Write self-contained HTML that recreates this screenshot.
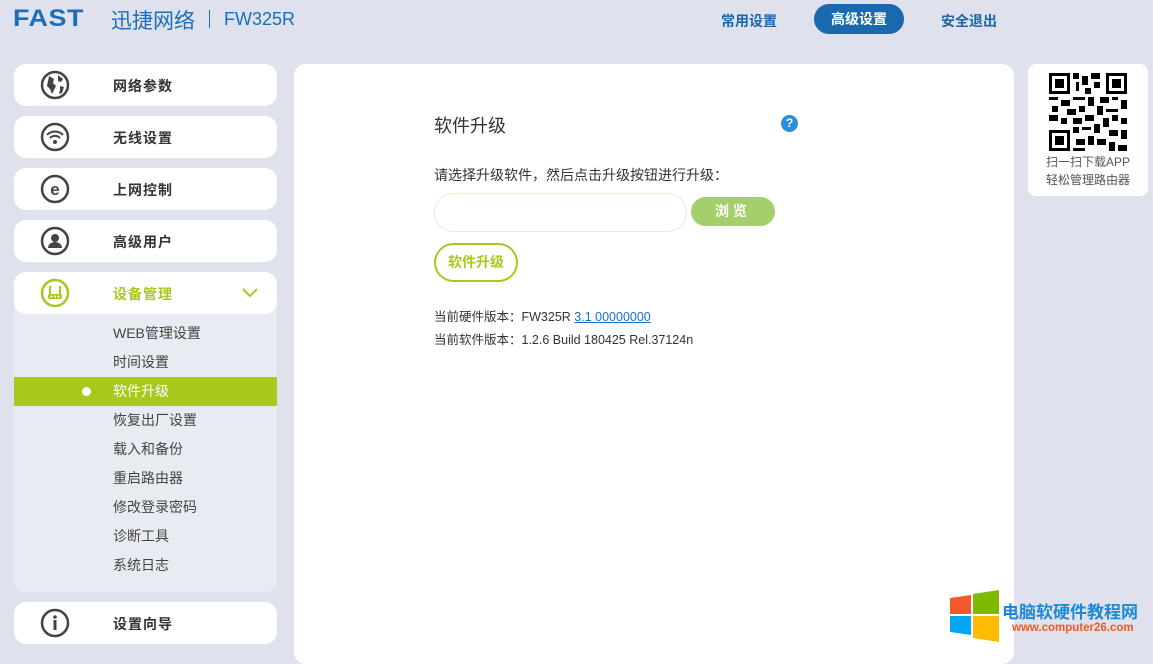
<!DOCTYPE html><html><head><meta charset="utf-8"><style>
*{margin:0;padding:0;box-sizing:border-box}
body{width:1153px;height:648px;overflow:hidden;background:#dfe1ec;font-family:"Liberation Sans","Noto Sans CJK SC",sans-serif;position:relative}
.a{position:absolute}
.item{position:absolute;left:14px;width:263px;height:42px;background:#fff;border-radius:12px}
.item .t{position:absolute;left:99px;top:12px;font-size:14px;font-weight:bold;color:#333;letter-spacing:1px}
.item svg{position:absolute;left:26px;top:6px}
.sub{position:absolute;left:113px;font-size:14px;color:#444}
</style></head><body>
<div class="a" style="left:13px;top:5px;font:900 24px 'Liberation Sans',sans-serif;color:#1a6fb8;letter-spacing:0.5px;transform:scaleX(1.12);transform-origin:left">FAST</div>
<div class="a" style="left:111px;top:5px;font-size:21px;color:#1a6fb8">迅捷网络</div>
<div class="a" style="left:209px;top:10px;width:1px;height:18px;background:#1a6fb8"></div>
<div class="a" style="left:224px;top:9px;font-size:18px;color:#1a6fb8">FW325R</div>
<div class="a" style="left:721px;top:11px;font-size:14px;font-weight:bold;color:#1f66a8">常用设置</div>
<div class="a" style="left:814px;top:4px;width:90px;height:30px;border-radius:15px;background:#1a68ad;color:#fff;font-size:14px;font-weight:bold;text-align:center;line-height:30px">高级设置</div>
<div class="a" style="left:941px;top:11px;font-size:14px;font-weight:bold;color:#1f66a8">安全退出</div>

<div class="item" style="top:64px"><svg width="30" height="30" viewBox="0 0 30 30"><circle cx="15" cy="15" r="13" fill="none" stroke="#444" stroke-width="2.5"/><path d="M9 6l5 3-1 4 3 3-2 4-2 4-2-5-3-3 1-5zM18 5l5 4-2 3-3-1zM20 16l4 1-2 6-3 1 1-4z" fill="#444"/></svg><div class="t">网络参数</div></div>
<div class="item" style="top:116px"><svg width="30" height="30" viewBox="0 0 30 30"><circle cx="15" cy="15" r="13" fill="none" stroke="#444" stroke-width="2.5"/><path d="M7 13a11 11 0 0 1 16 0M10 16a7 7 0 0 1 10 0" fill="none" stroke="#444" stroke-width="2"/><circle cx="15" cy="20" r="2" fill="#444"/></svg><div class="t">无线设置</div></div>
<div class="item" style="top:168px"><svg width="30" height="30" viewBox="0 0 30 30"><circle cx="15" cy="15" r="13" fill="none" stroke="#444" stroke-width="2.5"/><text x="15" y="21" text-anchor="middle" font-size="17" font-weight="bold" fill="#444" font-family="Liberation Sans">e</text></svg><div class="t">上网控制</div></div>
<div class="item" style="top:220px"><svg width="30" height="30" viewBox="0 0 30 30"><circle cx="15" cy="15" r="13" fill="none" stroke="#444" stroke-width="2.5"/><circle cx="15" cy="12" r="4" fill="#444"/><path d="M8 22a7 6 0 0 1 14 0z" fill="#444"/></svg><div class="t">高级用户</div></div>
<div class="a" style="left:14px;top:272px;width:263px;height:320px;background:#e9ebf2;border-radius:12px"></div>
<div class="item" style="top:272px"><svg width="30" height="30" viewBox="0 0 30 30"><circle cx="15" cy="15" r="13" fill="none" stroke="#a8c81e" stroke-width="2.5"/><path d="M10 8v8M20 8v8" stroke="#a8c81e" stroke-width="2"/><rect x="8" y="16" width="14" height="5" rx="2" fill="#a8c81e"/><circle cx="11.5" cy="18.5" r="1" fill="#fff"/><circle cx="15" cy="18.5" r="1" fill="#fff"/><circle cx="18.5" cy="18.5" r="1" fill="#fff"/></svg><div class="t" style="color:#a8c81e">设备管理</div><svg style="left:228px;top:16px" width="16" height="10" viewBox="0 0 16 10"><path d="M1 1l7 7 7-7" fill="none" stroke="#a8c81e" stroke-width="2"/></svg></div>
<div class="sub" style="top:323px">WEB管理设置</div>
<div class="sub" style="top:352px">时间设置</div>
<div class="a" style="left:14px;top:377px;width:263px;height:29px;background:#a8c81e"></div>
<div class="a" style="left:82px;top:387px;width:9px;height:9px;border-radius:50%;background:#fff"></div>
<div class="sub" style="top:381px;color:#fff">软件升级</div>
<div class="sub" style="top:410px">恢复出厂设置</div>
<div class="sub" style="top:439px">载入和备份</div>
<div class="sub" style="top:468px">重启路由器</div>
<div class="sub" style="top:497px">修改登录密码</div>
<div class="sub" style="top:526px">诊断工具</div>
<div class="sub" style="top:555px">系统日志</div>
<div class="item" style="top:602px"><svg width="30" height="30" viewBox="0 0 30 30"><circle cx="15" cy="15" r="13" fill="none" stroke="#444" stroke-width="2.5"/><circle cx="15" cy="9" r="1.8" fill="#444"/><rect x="13.5" y="12" width="3" height="10" fill="#444"/></svg><div class="t">设置向导</div></div>

<div class="a" style="left:294px;top:64px;width:720px;height:600px;background:#fff;border-radius:12px"></div>
<div class="a" style="left:434px;top:112px;font-size:18px;color:#333">软件升级</div>
<div class="a" style="left:781px;top:115px;width:17px;height:17px;border-radius:50%;background:#2a8fdc;color:#fff;font-size:12px;font-weight:bold;text-align:center;line-height:17px">?</div>
<div class="a" style="left:434px;top:165px;font-size:14px;color:#333">请选择升级软件，然后点击升级按钮进行升级：</div>
<div class="a" style="left:434px;top:193px;width:253px;height:39px;border:1.5px solid #e3efcf;border-radius:20px"></div>
<div class="a" style="left:691px;top:197px;width:84px;height:29px;border-radius:15px;background:#a3d06c;color:#fff;font-size:14px;font-weight:bold;text-align:center;line-height:29px;letter-spacing:4px">浏览</div>
<div class="a" style="left:434px;top:243px;width:84px;height:39px;border:2px solid #a8c81e;border-radius:20px;color:#a8c81e;font-size:14px;font-weight:bold;text-align:center;line-height:35px">软件升级</div>
<div class="a" style="left:434px;top:306px;font-size:12.5px;color:#333">当前硬件版本：FW325R <span style="color:#1a6fd0;text-decoration:underline">3.1 00000000</span></div>
<div class="a" style="left:434px;top:329px;font-size:12.5px;color:#333">当前软件版本：1.2.6 Build 180425 Rel.37124n</div>

<div class="a" style="left:1028px;top:64px;width:120px;height:132px;background:#fff;border-radius:8px"></div>
<svg class="a" style="left:1049px;top:73px" width="78" height="78" viewBox="0 0 26 26"><rect width="26" height="26" fill="#fff"/><g fill="#000"><path d="M0 0h7v7H0zM19 0h7v7h-7zM0 19h7v7H0z"/></g><g fill="#fff"><path d="M1 1h5v5H1zM20 1h5v5h-5zM1 20h5v5H1z"/></g><g fill="#000"><path d="M2 2h3v3H2zM21 2h3v3h-3zM2 21h3v3H2zM8 0h2v2H8zM11 1h2v3h-2zM14 0h3v2h-3zM9 3h1v3H9zM15 3h2v2h-2zM12 5h2v2h-2zM0 8h3v1H0zM4 9h3v2H4zM8 8h4v1H8zM13 8h2v3h-2zM17 8h3v2h-3zM21 8h2v1h-2zM24 9h2v3h-2zM1 11h2v2H1zM6 12h3v2H6zM10 11h2v2h-2zM16 11h2v3h-2zM19 12h4v1h-4zM0 14h3v2H0zM4 15h2v2H4zM8 15h3v2H8zM12 14h3v2h-3zM18 15h2v3h-2zM21 14h2v2h-2zM24 15h2v2h-2zM8 18h2v2H8zM11 18h3v1h-3zM15 17h2v3h-2zM20 19h3v2h-3zM24 19h2v3h-2zM9 22h3v2H9zM13 21h2v3h-2zM16 22h3v2h-3zM20 23h2v3h-2zM8 25h4v1H8zM23 24h3v2h-3z"/></g></svg>
<div class="a" style="left:1028px;top:153px;width:120px;text-align:center;font-size:12px;color:#555;line-height:18px">扫一扫下载APP<br>轻松管理路由器</div>

<svg class="a" style="left:948px;top:590px" width="52" height="52" viewBox="0 0 52 52"><path d="M2 8l21-3v19H2z" fill="#f25a2b"/><path d="M25 4l26-4v24H25z" fill="#7fba00"/><path d="M2 26h21v19L2 42z" fill="#05a6f0"/><path d="M25 26h26v26l-26-4z" fill="#ffba01"/></svg>
<div class="a" style="left:1002px;top:598px;font-size:17px;font-weight:bold;color:#1a8ad8">电脑软硬件教程网</div>
<div class="a" style="left:1012px;top:622px;font-size:11.5px;font-weight:bold;color:#f05a22">www.computer26.com</div>
</body></html>
